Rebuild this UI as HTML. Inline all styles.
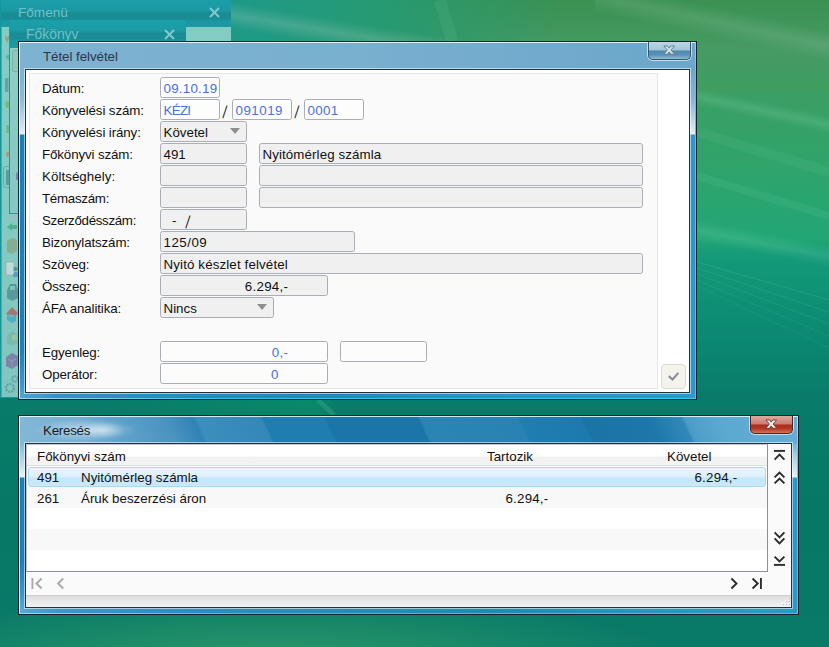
<!DOCTYPE html>
<html lang="hu">
<head>
<meta charset="utf-8">
<title>Tétel felvétel</title>
<style>
html,body{margin:0;padding:0;}
body{width:829px;height:647px;overflow:hidden;position:relative;
  font-family:"Liberation Sans",sans-serif;font-size:13.33px;color:#111;
  background:#0b7563;}
.abs,.abs *{position:absolute;box-sizing:border-box;}
#bg{left:0;top:0;width:829px;height:647px;overflow:hidden;
  background:
   linear-gradient(180deg,#3a9152 0px,#469a63 50px,#3e9e60 91px,#3a9f63 93px,#2fa46c 170px,#22a675 238px,#139a78 256px,#0c8b73 325px,#087b6a 400px,#077866 520px,#0a7a68 647px);}
#bg .glowL{left:230px;top:0;width:330px;height:60px;background:linear-gradient(90deg,#1d9a88 0,#269a72 45%,rgba(60,154,95,0) 100%);}
#bg .streak1{left:232px;top:2px;width:280px;height:26px;transform:rotate(9.5deg);transform-origin:0 0;
  background:linear-gradient(180deg,rgba(255,255,255,0),rgba(200,215,205,.22) 50%,rgba(255,255,255,0));}
#bg .streak1b{left:600px;top:-18px;width:300px;height:30px;transform:rotate(12deg);transform-origin:0 0;
  background:linear-gradient(180deg,rgba(255,255,255,0),rgba(255,255,255,.10) 50%,rgba(255,255,255,0));}
#bg .streak2{left:690px;top:86px;width:200px;height:18px;transform:rotate(12deg);transform-origin:0 0;
  background:linear-gradient(180deg,rgba(255,255,255,0),rgba(190,255,220,.13) 50%,rgba(255,255,255,0));}
#bg .streak3{left:690px;top:218px;width:200px;height:22px;transform:rotate(11deg);transform-origin:0 0;
  background:linear-gradient(180deg,rgba(255,255,255,0),rgba(190,255,220,.12) 50%,rgba(255,255,255,0));}
#bg .botglow{left:0;top:608px;width:760px;height:39px;background:radial-gradient(ellipse 52% 140% at 36% 115%,rgba(62,165,105,.62),rgba(50,160,105,.4) 50%,rgba(40,150,105,0) 100%);}

/* background teal windows */
#w_fomenu{left:0;top:0;width:231px;height:398px;border-bottom:1px solid #15959c;background:linear-gradient(180deg,#82cdc4 0,#84cbc3 200px,#80c5bf 398px);border-left:1px solid #15959c;box-shadow:inset 1px 0 0 #45adb0;}
#w_fomenu .tb{left:0;top:0;width:230px;height:27px;background:linear-gradient(180deg,#1a9ea8 0,#1b99a3 11px,#198b95 13px,#198d97 19px,#1b98a2 21px,#1b9aa4 27px);}
#w_fomenu .ti{left:17px;top:3px;line-height:20px;font-size:13.6px;color:#6fc2c7;}
#w_fokonyv{left:9px;top:20px;width:177px;height:194px;background:linear-gradient(180deg,#8fd3c6 0,#88cbc4 100px,#84c8c4 194px);border-left:1.4px solid #1b9aa3;border-bottom:1px solid #1b9aa3;}
#w_fokonyv .tb{left:0;top:0;width:176px;height:28px;background:linear-gradient(180deg,#1aa0aa 0,#1b9aa4 11px,#198c96 13px,#198e98 19px,#1b98a2 21px,#1b9aa4 28px);}
#w_fokonyv .ti{left:16px;top:4px;line-height:20px;font-size:13.9px;color:#6fc2c7;}
#w_fokonyv .btn{left:2px;top:30px;width:9px;height:22px;border:1px solid #79b3a8;border-radius:2px;background:#8cc9b9;}
.xic{width:11px;height:11px;}
.ico{border-radius:2px;opacity:.8;}

/* aero windows */
.win{border:1px solid #15232f;overflow:hidden;}
.win .fr{left:0;top:0;right:0;bottom:0;border:1px solid rgba(255,255,255,.8);}
.win .cl{background:#fff;border:1px solid #27323f;box-shadow:0 0 0 1px rgba(255,255,255,.55);}
.title{font-size:13.33px;line-height:20px;color:#1a1a24;white-space:nowrap;}
.cbx{left:0;top:0;width:100%;height:100%;}

#w1{left:18px;top:41px;width:679px;height:359px;background:#7bb0d0;}
#w1 .gl{left:0;top:0;width:677px;height:357px;
  background:linear-gradient(90deg,#7db2d1 0,#79afcf 50%,#6aa7ca 100%);}
#w1 .sideL{left:0;top:28px;width:7px;height:329px;background:linear-gradient(180deg,#7db2d1 0,#8cbbd7 30px,#e4f0f7 64px,#1a7fb4 65px,#1c80b5 280px,#3a95c6 312px,#58a8d0 329px);}
#w1 .sideR{left:670px;top:28px;width:7px;height:329px;background:linear-gradient(180deg,#6aa7ca 0,#85b8d6 30px,#e4f0f7 64px,#2a98cc 65px,#2a98cc 329px);}
#w1 .bot{left:0;top:350px;width:677px;height:7px;background:linear-gradient(90deg,#50a4ce 0,#3491c4 40px,#2688bc 200px,#2486bb 45%,#2c93c6 70%,#2a98cc 100%);}
#w1 .hiR{left:676px;top:0;width:1px;height:357px;background:linear-gradient(180deg,#7fdcf8 0,#3fd0fa 30px,#2fcdfb 100%);}
#w1 .hiB{left:0;top:356px;width:677px;height:1px;background:linear-gradient(90deg,#9fd8ee 0,#33c0ee 30%,#2fcdfb 100%);}
#w1 .cl{left:6px;top:27px;width:665px;height:324px;}
#w1 .title{left:24px;top:5px;color:#33334a;letter-spacing:-.05px;}
#w1 .cb{left:629px;top:0;width:43px;height:18px;border:1px solid #34566c;border-top:none;border-radius:0 0 5px 5px;
  background:linear-gradient(180deg,#bdd7e5 0,#a3c6da 8px,#4f88ab 9px,#5b93b5 13px,#8fbdd4 17px);box-shadow:0 0 0 1px rgba(255,255,255,.6);}

#w2{left:18px;top:415px;width:781px;height:200px;background:#2a8ec6;}
#w2 .gl{left:-20px;top:0;width:830px;height:28px;transform:skewX(25deg);transform-origin:0 14px;
  background:linear-gradient(90deg,#82b7d6 20px,#78b0d3 80px,#5fa2ca 120px,#4a94c0 170px,#3083b5 200px,#3b8fbd 203px,#3388b8 267px,#1f7db0 270px,#1f7db0 330px,#1a76a8 333px,#1a76a8 424px,#2a84b4 427px,#2882b3 524px,#1f7db0 527px,#1e7aae 586px,#1a74a6 589px,#1c78aa 655px,#3189bb 688px,#4a9cc8 691px,#5aa8d0 720px,#66aed5 799px);}
#w2 .glow{left:0;top:0;width:160px;height:28px;background:radial-gradient(ellipse 52px 11px at 66px 14px,rgba(255,255,255,.5),rgba(255,255,255,.22) 55%,rgba(255,255,255,0) 100%),radial-gradient(ellipse 22px 8px at 84px 14px,rgba(255,255,255,.45),rgba(255,255,255,0) 100%);}
#w2 .sideL{left:0;top:28px;width:7px;height:170px;background:linear-gradient(180deg,#86badA 0,#a8cfe4 12px,#e8f3f9 33px,#1a7fb4 34px,#1c80b5 120px,#3f98c8 152px,#62b0d6 170px);}
#w2 .sideR{left:772px;top:28px;width:7px;height:170px;background:linear-gradient(180deg,#74b5d9 0,#a8cfe4 12px,#e8f3f9 33px,#2a98cc 34px,#2a98cc 170px);}
#w2 .bot{left:0;top:191px;width:779px;height:7px;background:linear-gradient(90deg,#58aad2 0,#3a97c8 40px,#2a8cc0 200px,#2486bb 60%,#2c93c6 80%,#2a98cc 100%);}
#w2 .hiR{left:778px;top:0;width:1px;height:198px;background:linear-gradient(180deg,#a8e4f8 0,#4fd0f6 40px,#2fcdfb 100%);}
#w2 .hiB{left:0;top:197px;width:779px;height:1px;background:linear-gradient(90deg,#9fd8ee 0,#33c0ee 30%,#2fcdfb 100%);}
#w2 .cl{left:6px;top:27px;width:767px;height:165px;background:#fafafa;}
#w2 .title{left:24px;top:5px;letter-spacing:-.25px;}
#w2 .cb{left:731px;top:0;width:43px;height:18px;border:1px solid #4e2424;border-top:none;border-radius:0 0 5px 5px;
  background:linear-gradient(180deg,#e0a8a0 0,#cc7c70 8px,#aa2a1b 9px,#b53c29 13px,#d27655 17px);box-shadow:0 0 0 1px rgba(255,255,255,.6);}
.stripe{height:70px;transform:skewX(-38deg);transform-origin:0 0;top:0;}

/* form */
#panel{left:3px;top:3px;width:629px;height:316px;background:#fafafa;border:1px solid #e6e6e6;}
.lb{left:12px;line-height:21px;height:21px;white-space:nowrap;color:#111;letter-spacing:-.12px;}
.f{height:21px;border:1px solid #a9aeb4;border-radius:2.6px;background:#f0f0f0;line-height:21px;padding:0 0 0 2.5px;white-space:nowrap;color:#111;}
.f.e{background:#fdfdfd;color:#4472dd;}
.f.w{background:#fcfcfc;color:#4472dd;}
.f span{top:0;line-height:21px;}
.sl{line-height:21px;height:21px;color:#222;font-size:13.33px;transform:scaleY(1.3) skewX(-9deg);transform-origin:50% 50%;}
.tri{width:0;height:0;border-left:5.5px solid transparent;border-right:5.5px solid transparent;border-top:6px solid #8e8e8e;}
#okb{left:635px;top:294px;width:25px;height:25px;border:1px solid #dddbcb;border-radius:4px;background:#f5f4ec;}

/* list */
#list{left:0;top:0;width:742px;height:128px;border:1px solid #8e8e9a;border-left-color:#c4c4cc;border-top-color:#c4c4cc;background:#fff;}
.row{left:0;width:740px;height:21px;}
.row.g{background:#f8f8f8;}
.c{line-height:24.2px;height:23px;white-space:nowrap;color:#111;}
#hdr{left:0;top:0;width:740px;height:21px;border-bottom:1px solid #dcdcdc;background:linear-gradient(180deg,#fff 0,#fff 11px,#f2f2f2 12px,#f4f4f4 21px);}
#sel{left:1px;top:22px;width:738px;height:20px;border:1px solid #a6d8f2;border-radius:3px;
  background:linear-gradient(180deg,#eaf6fd 0,#dbf0fc 9px,#c5e6f9 10px,#cbeafb 20px);}
#status{left:0;top:151px;width:765px;height:12px;background:linear-gradient(180deg,#c4c4c4 0,#d9d9d9 1px,#e4e4e4 4px,#f2f2f2 12px);}
#nav{left:0;top:0;width:765px;height:163px;}
</style>
</head>
<body>
<div class="abs" id="bg">
  <div class="glowL"></div>
  <div class="streak1"></div>
  <div class="streak1b"></div>
  <div class="streak2"></div>
  <div class="streak3"></div>
  <div class="botglow"></div>
  <div style="left:100px;top:398px;width:260px;height:19px;background:linear-gradient(90deg,rgba(10,150,105,0) 0,rgba(10,150,105,.45) 190px,rgba(10,150,105,.5) 215px,rgba(10,150,105,0) 240px)"></div>
  <svg style="left:0;top:0;width:829px;height:647px" viewBox="0 0 829 647" fill="none">
    <g stroke="#c8ffe6" stroke-linecap="butt">
      <path d="M697 132L829 172" stroke-width="10" stroke-opacity=".05"/>
      <path d="M697 176L829 216" stroke-width="8" stroke-opacity=".06"/>
      <path d="M697 262L829 300" stroke-width="1" stroke-opacity=".10"/>
      <path d="M697 268L829 312" stroke-width="1" stroke-opacity=".09"/>
      <path d="M697 274L829 324" stroke-width="1" stroke-opacity=".08"/>
      <path d="M697 280L829 336" stroke-width="1" stroke-opacity=".07"/>
      <path d="M697 286L829 348" stroke-width="1" stroke-opacity=".06"/>
      <path d="M318 400L334 415" stroke-width="5" stroke-opacity=".12"/>
      <path d="M440 0L452 41" stroke-width="12" stroke-opacity=".06"/>
    </g>
  </svg>
</div>

<!-- Főmenü -->
<div class="abs" id="w_fomenu">
  <div class="tb"></div>
  <div class="ti">Főmenü</div>
  <svg class="xic" style="left:208px;top:7px" viewBox="0 0 11 11"><path d="M1 1L10 10M10 1L1 10" stroke="#84c9ce" stroke-width="1.9" fill="none"/></svg>
  <svg style="left:0;top:27px;width:20px;height:370px" viewBox="1 27 20 370">
    <g opacity=".62">
      <path d="M5 35l2 3 2-3v3l-2 5-2-5z" fill="#a8884a"/>
      <path d="M5 57l4-3v6z" fill="#3fa8a0"/>
      <rect x="5" y="78" width="3.5" height="14" rx="1" fill="#4a9096"/>
      <ellipse cx="7.5" cy="104.500" rx="2.200" ry="3.500" fill="#6cb25a"/>
      <rect x="6" y="125" width="3" height="8" rx="1" fill="#5fb07c"/>
      <path d="M6 151l2 2 1-2v4l-1.500 3-1.500-3z" fill="#a88a5a"/>
      <rect x="3.500" y="166.500" width="9" height="21" rx="2" fill="none" stroke="#5a9aa0" stroke-width="1"/>
      <rect x="6" y="170" width="3.500" height="15" rx="1" fill="#3f8088"/>
      <rect x="9" y="214" width="8" height="6" fill="#9fc0c4"/>
      <path d="M7 227l5-4v2h5v4h-5v2z" fill="#2aa468"/>
      <path d="M7 241l5-3 5 2v11l-5 3-5-2z" fill="#8a9c74"/>
      <rect x="6" y="262" width="8" height="13" fill="#dfe8ea" stroke="#a8a890" stroke-width=".8"/>
      <path d="M13 277c0-4 1-5 3-5s2 1 2 5z" fill="#3a86c4"/><circle cx="15.500" cy="269" r="2.200" fill="#4a7a78"/>
      <path d="M7 290l3-6h6l2 6v8l-6 3-5-3z" fill="#3f7f86"/><rect x="10" y="286" width="5" height="4" fill="#7ac0b8"/>
      <path d="M6 314l6-7 6 6-2 3z" fill="#b24a44"/><path d="M7 314l5 3 4-2v6l-4 2-5-3z" fill="#3a9ccc"/>
      <path d="M7 336l6-5 5 4v8l-6 3-5-3z" fill="#78b2a8"/><rect x="12" y="335" width="5" height="5" fill="#9cc88a"/>
      <path d="M6 357l6-4 6 3v9l-6 4-6-3z" fill="#7a5c9a"/><path d="M8 359l4 2v6M12 361l4-2" stroke="#9a80b4" stroke-width="1" fill="none"/>
      <circle cx="10" cy="388" r="4" fill="none" stroke="#4f9094" stroke-width="2.200" stroke-dasharray="2 1"/>
      <circle cx="15" cy="379" r="2.800" fill="none" stroke="#4a8a98" stroke-width="2" stroke-dasharray="1.600 .9"/>
    </g>
  </svg>
</div>
<!-- Főkönyv -->
<div class="abs" id="w_fokonyv">
  <div class="tb"></div>
  <div class="ti">Főkönyv</div>
  <svg class="xic" style="left:154px;top:9px" viewBox="0 0 11 11"><path d="M1 1L10 10M10 1L1 10" stroke="#84c9ce" stroke-width="1.9" fill="none"/></svg>
  <div class="btn"></div>
  <div class="ico" style="left:6px;top:152px;width:3px;height:8px;background:#8a6ab8"></div>
</div>

<!-- Window 1 -->
<div class="abs win" id="w1">
  <div class="gl"></div>
  <div class="sideL"></div><div class="sideR"></div><div class="bot"></div>
  <div class="fr"></div>
  <div class="hiR"></div><div class="hiB"></div>
  <div class="title">Tétel felvétel</div>
  <div class="cb"><svg class="cbx" viewBox="0 0 43 18"><path d="M15.6 4.2h3.9l1.7 2.3 1.7-2.3h3.9l-3.6 4.3 3.8 4.5h-4l-1.8-2.5-1.8 2.5h-4l3.8-4.5z" fill="#d3dde4" stroke="#56778c" stroke-width=".9"/></svg></div>
  <div class="cl">
    <div id="panel">
      <div class="lb" style="top:4px">Dátum:</div>
      <div class="lb" style="top:26px">Könyvelési szám:</div>
      <div class="lb" style="top:48px">Könyvelési irány:</div>
      <div class="lb" style="top:70px">Főkönyvi szám:</div>
      <div class="lb" style="top:92px;letter-spacing:.05px">Költséghely:</div>
      <div class="lb" style="top:114px;letter-spacing:-.28px">Témaszám:</div>
      <div class="lb" style="top:136px;letter-spacing:-.32px">Szerződésszám:</div>
      <div class="lb" style="top:158px">Bizonylatszám:</div>
      <div class="lb" style="top:180px">Szöveg:</div>
      <div class="lb" style="top:202px">Összeg:</div>
      <div class="lb" style="top:224px">ÁFA analitika:</div>
      <div class="lb" style="top:268px">Egyenleg:</div>
      <div class="lb" style="top:290px">Operátor:</div>

      <div class="f e" style="left:130px;top:3px;width:60px;letter-spacing:.25px">09.10.19</div>
      <div class="f e" style="left:130px;top:25px;width:60px;letter-spacing:-.7px">KÉZI</div>
      <div class="sl" style="left:192.5px;top:27.5px">/</div>
      <div class="f e" style="left:202px;top:25px;width:60px;letter-spacing:.5px">091019</div>
      <div class="sl" style="left:264.5px;top:27.5px">/</div>
      <div class="f e" style="left:274px;top:25px;width:60px;letter-spacing:.3px">0001</div>
      <div class="f" style="left:130px;top:47px;width:87px">Követel<div class="tri" style="left:69px;top:6px"></div></div>
      <div class="f" style="left:130px;top:69px;width:87px">491</div>
      <div class="f" style="left:229px;top:69px;width:384px;letter-spacing:.1px">Nyitómérleg számla</div>
      <div class="f" style="left:130px;top:91px;width:87px"></div>
      <div class="f" style="left:229px;top:91px;width:384px"></div>
      <div class="f" style="left:130px;top:113px;width:87px"></div>
      <div class="f" style="left:229px;top:113px;width:384px"></div>
      <div class="f" style="left:130px;top:135px;width:87px"><span style="left:11px">-</span><span style="left:24.5px;top:2px;color:#222;transform:scaleY(1.3) skewX(-9deg);transform-origin:50% 50%">/</span></div>
      <div class="f" style="left:130px;top:157px;width:195px;letter-spacing:.5px">125/09</div>
      <div class="f" style="left:130px;top:179px;width:483px;letter-spacing:.13px">Nyitó készlet felvétel</div>
      <div class="f" style="left:130px;top:201px;width:168px;text-align:right;padding-right:38.7px;letter-spacing:.3px">6.294,-</div>
      <div class="f" style="left:130px;top:223px;width:114px">Nincs<div class="tri" style="left:96px;top:6px"></div></div>
      <div class="f w" style="left:130px;top:267px;width:168px;text-align:right;padding-right:38.7px;letter-spacing:.3px">0,-</div>
      <div class="f w" style="left:310px;top:267px;width:87px"></div>
      <div class="f w" style="left:130px;top:289px;width:168px;text-align:right;padding-right:48.6px">0</div>
    </div>
    <div id="okb"><svg class="cbx" viewBox="0 0 25 25"><path d="M7.4 12.1l4 3.6 6.4-7.1" stroke="#8b8b93" stroke-width="2.3" fill="none"/></svg></div>
  </div>
</div>

<!-- Window 2 -->
<div class="abs win" id="w2">
  <div class="gl"></div>
  <div class="glow"></div>
  <div class="sideL"></div><div class="sideR"></div><div class="bot"></div>
  <div class="fr"></div>
  <div class="hiR"></div><div class="hiB"></div>
  <div class="title">Keresés</div>
  <div class="cb"><svg class="cbx" viewBox="0 0 43 18"><path d="M15.6 4.2h3.9l1.7 2.3 1.7-2.3h3.9l-3.6 4.3 3.8 4.5h-4l-1.8-2.5-1.8 2.5h-4l3.8-4.5z" fill="#f6f0ee" stroke="#5e302c" stroke-width=".9"/></svg></div>
  <div class="cl">
    <div id="list">
      <div id="hdr">
        <div class="c" style="left:10px;top:0px">Főkönyvi szám</div>
        <div class="c" style="left:460px;top:0px">Tartozik</div>
        <div class="c" style="left:640px;top:0px">Követel</div>
      </div>
      <div class="row g" style="top:42px"></div>
      <div class="row" style="top:63px"></div>
      <div class="row g" style="top:84px"></div>
      <div class="row" style="top:105px"></div>
      <div id="sel"></div>
      <div class="c" style="left:10px;top:21px">491</div>
      <div class="c" style="left:54px;top:21px">Nyitómérleg számla</div>
      <div class="c" style="left:667.5px;top:21px;letter-spacing:.2px">6.294,-</div>
      <div class="c" style="left:10px;top:42px">261</div>
      <div class="c" style="left:54px;top:42px">Áruk beszerzési áron</div>
      <div class="c" style="left:478.5px;top:42px;letter-spacing:.2px">6.294,-</div>
    </div>
    <div id="status"></div>
    <svg id="nav" viewBox="0 0 765 163" fill="none" stroke-linecap="butt" stroke-linejoin="miter">
      <g stroke="#2b2b2b" stroke-width="1.9">
        <path d="M747.9 6.9H759"/>
        <path d="M748.6 15.6L753.5 10.7L758.4 15.6"/>
        <path d="M748.6 33.4L753.5 28.5L758.4 33.4M748.6 39.4L753.5 34.5L758.4 39.4"/>
        <path d="M748.6 88.4L753.5 93.3L758.4 88.4M748.6 94.4L753.5 99.3L758.4 94.4"/>
        <path d="M748.6 112.6L753.5 117.5L758.4 112.6"/>
        <path d="M747.9 120.9H759"/>
        <path d="M705.4 134.5L710.5 139.5L705.4 144.5"/>
        <path d="M726.6 134.5L731.7 139.5L726.6 144.5M734.9 134.1V144.9"/>
      </g>
      <g stroke="#a9a9a9" stroke-width="1.9">
        <path d="M6.4 134.1V144.9M15.6 134.5L10.5 139.5L15.6 144.5"/>
        <path d="M37.2 134.5L32.1 139.5L37.2 144.5"/>
      </g>
      <g fill="#fff" stroke="none">
        <rect x="762" y="153" width="1" height="1"/><rect x="759" y="156" width="1" height="1"/><rect x="762" y="156" width="1" height="1"/>
        <rect x="756" y="159" width="1" height="1"/><rect x="759" y="159" width="1" height="1"/><rect x="762" y="159" width="1" height="1"/>
      </g>
      <g fill="#b8b8b8" stroke="none">
        <rect x="763" y="154" width="1" height="1"/><rect x="760" y="157" width="1" height="1"/><rect x="763" y="157" width="1" height="1"/>
        <rect x="757" y="160" width="1" height="1"/><rect x="760" y="160" width="1" height="1"/><rect x="763" y="160" width="1" height="1"/>
      </g>
    </svg>
  </div>
</div>
</body>
</html>
